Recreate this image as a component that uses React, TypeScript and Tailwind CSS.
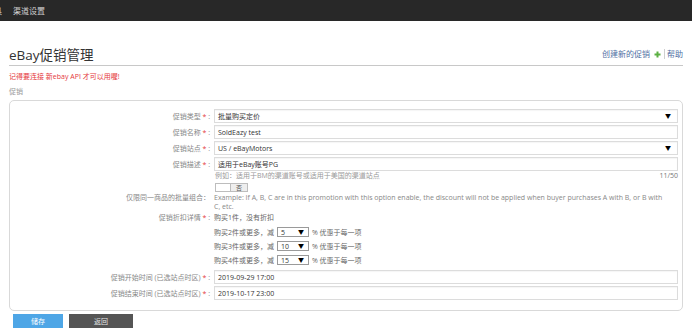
import React from 'react';

const Star = () => <span className="text-[#e4393c]"> *</span>;

const Label: React.FC<{ text: string; required?: boolean; colon?: string }> = ({ text, required, colon = ' :' }) => (
  <div className="w-[204px] shrink-0 text-right pr-[4px] text-[#888] whitespace-nowrap">
    {text}
    {required && <Star />}
    {colon}
  </div>
);

const Arrow = () => <span className="text-[6px] text-black leading-none">▼</span>;

const TextBox: React.FC<{ value: string; select?: boolean }> = ({ value, select }) => (
  <div className="flex-1 h-[14px] border border-[#dcdcdc] bg-white shadow-[inset_0_1px_1px_rgba(0,0,0,0.04)] flex items-center justify-between pl-[3px] pr-[6px] text-[#333]">
    <span>{value}</span>
    {select && <Arrow />}
  </div>
);

const Row: React.FC<{ label: string; value: string; select?: boolean }> = ({ label, value, select }) => (
  <div className="flex items-center h-[14px]">
    <Label text={label} required />
    <div className="flex-1 flex pr-[4px]">
      <TextBox value={value} select={select} />
    </div>
  </div>
);

const Tier: React.FC<{ qty: number; pct: string }> = ({ qty, pct }) => (
  <div className="flex items-center h-[10px] text-[#666]">
    <span>购买{qty}件或更多，减</span>
    <div className="ml-[3px] w-[32px] h-[10px] border border-[#9a9a9a] bg-white flex items-center justify-between pl-[3px] pr-[4px] text-[#333]">
      <span>{pct}</span>
      <Arrow />
    </div>
    <span className="ml-[3px]">% 优惠于每一项</span>
  </div>
);

export default function App() {
  return (
    <div className="w-[692px] h-[334px] bg-white overflow-hidden font-['Open_Sans','Noto_Sans_CJK_SC',sans-serif] text-[7px] leading-[9px]">
      <div className="h-[21px] bg-[#282828] flex items-center text-[8px] text-[#cfcfcf]">
        <span className="-ml-[6px]">具</span>
        <span className="ml-[11px]">渠道设置</span>
      </div>

      <div className="px-[9px]">
        <div className="h-[45px] flex items-end justify-between border-b border-[#c8c8c8]">
          <h1 className="text-[13.5px] leading-[18px] text-[#333] pb-[1px]">eBay促销管理</h1>
          <div className="flex items-center text-[8px] leading-[10px] text-[#4f6fa3] pb-[6px]">
            <span>创建新的促销</span>
            <svg className="ml-[4px]" width="7" height="7" viewBox="0 0 7 7">
              <path d="M2.5 0.5h2v2h2v2h-2v2h-2v-2h-2v-2h2z" fill="#5cb043" />
            </svg>
            <span className="ml-[3px] w-px h-[10px] bg-[#cfcfcf]" />
            <span className="ml-[2px]">帮助</span>
          </div>
        </div>

        <div className="mt-[6px] leading-[10px] text-[#e5383b]">记得要连接 新ebay API 才可以用喔!</div>
        <div className="mt-[5px] leading-[10px] text-[#999]">促销</div>

        <div className="mt-[3px] border border-[#d9d9d9] rounded-[5px] pt-[8px] pb-[10px]">
          <div className="flex flex-col gap-[2px]">
            <Row label="促销类型" value="批量购买定价" select />
            <Row label="促销名称" value="SoldEazy test" />
            <Row label="促销站点" value="US / eBayMotors" select />
            <Row label="促销描述" value="适用于eBay账号PG" />
          </div>

          <div className="flex">
            <div className="w-[204px] shrink-0" />
            <div className="flex-1 pr-[4px]">
              <div className="flex justify-between leading-[8px] mt-[1px] text-[#999]">
                <span className="pl-[1px]">例如：适用于BM的渠道账号或适用于美国的渠道站点</span>
                <span className="text-[#777]">11/50</span>
              </div>
              <div className="mt-[3px] ml-[1px] flex w-[33px] h-[9px] border border-[#bdbdbd]">
                <div className="w-[15px] bg-white border-r border-[#bdbdbd]" />
                <div className="flex-1 bg-[#eeeeee] flex items-center justify-center text-[#555] text-[6px] leading-none">否</div>
              </div>
            </div>
          </div>

          <div className="flex mt-[1px]">
            <Label text="仅限同一商品的批量组合" colon="：" />
            <div className="flex-1 pr-[4px] text-[#888]">
              Example: If A, B, C are in this promotion with this option enable, the discount will not be applied when buyer purchases A with B, or B with
              <br />
              C, etc.
            </div>
          </div>

          <div className="flex mt-[2px]">
            <Label text="促销折扣详情" required />
            <div className="flex-1 flex flex-col">
              <div className="text-[#666]">购买1件，没有折扣</div>
              <div className="mt-[5px] flex flex-col gap-[4px]">
                <Tier qty={2} pct="5" />
                <Tier qty={3} pct="10" />
                <Tier qty={4} pct="15" />
              </div>
            </div>
          </div>

          <div className="mt-[5px] flex flex-col gap-[2px]">
            <Row label="促销开始时间 (已选站点时区)" value="2019-09-29 17:00" />
            <Row label="促销结束时间 (已选站点时区)" value="2019-10-17 23:00" />
          </div>
        </div>

        <div className="mt-[3px] ml-[4px] flex gap-[6px]">
          <button className="w-[50px] h-[14px] bg-[#4ea6e6] text-white text-[7px] leading-none">储存</button>
          <button className="w-[64px] h-[14px] bg-[#555555] text-[#e5e5e5] text-[7px] leading-none">返回</button>
        </div>
      </div>
    </div>
  );
}
